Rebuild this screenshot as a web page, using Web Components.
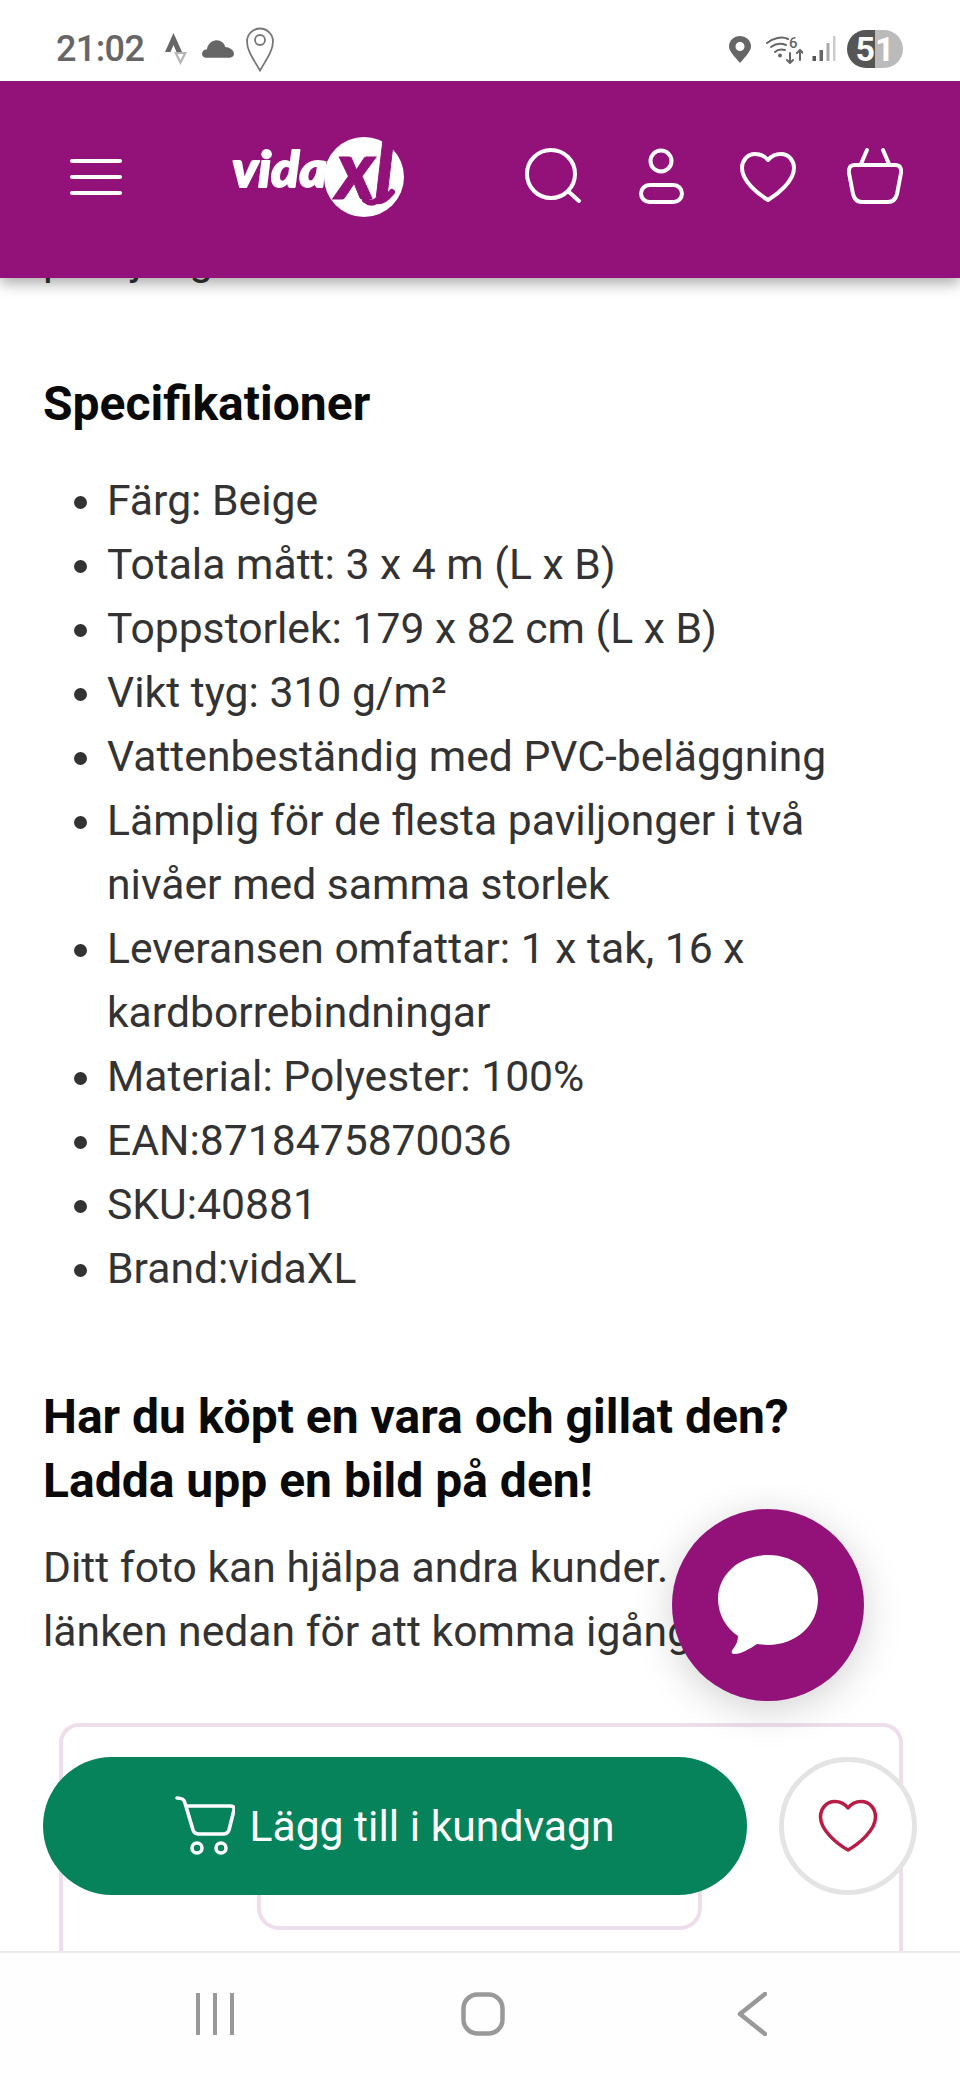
<!DOCTYPE html>
<html lang="sv"><head><meta charset="utf-8"><title>vidaXL</title>
<style>html,body{margin:0;padding:0;background:#fff}body{font-family:Roboto,sans-serif}</style>
</head><body>
<app-shell>
  <status-bar slot="status"></status-bar>
  <site-header slot="header"></site-header>
  <product-copy slot="content"></product-copy>
  <buy-bar slot="over"></buy-bar>
  <chat-fab slot="over"></chat-fab>
  <nav-bar slot="nav"></nav-bar>
</app-shell>
<script>
function def(name, html){
  customElements.define(name, class extends HTMLElement{
    constructor(){super();this.attachShadow({mode:'open'}).innerHTML=html;}
  });
}
def('app-shell',`<style>
:host{display:flex;flex-direction:column;width:960px;height:2080px;position:relative;overflow:hidden;background:#fff}
.c{flex:1;min-height:0;margin-top:-51px;overflow:hidden;display:block}
</style>
<slot name="status"></slot><slot name="header"></slot>
<div class="c"><slot name="content"></slot></div>
<slot name="over"></slot><slot name="nav"></slot>`);

def('status-bar',`<style>
:host{display:flex;align-items:center;height:81px;box-sizing:border-box;padding:17px 57px 0 56px;background:#fff;color:#666;position:relative;z-index:3}
.t{font:500 36px/1 Roboto,sans-serif;width:87px;letter-spacing:-.6px;white-space:nowrap}
svg{display:block;flex:none}
.r{margin-left:auto;display:flex;align-items:center}
.b{width:56px;height:38px;border-radius:19px;background:linear-gradient(90deg,#555 0 50%,#bbb 50% 100%);margin-left:10px;font:700 34px/38px Roboto,sans-serif;color:#fff;text-align:center}
</style>
<span class="t">21:02</span>
<svg style="margin-left:22px" width="22" height="32" viewBox="0 0 22 32"><path d="M8.500 0L17 19H11.500L8.500 12L5.500 19H0Z" fill="#666"/><path fill-rule="evenodd" d="M9 19H22L15.500 32ZM12.500 21L15.500 27L18.500 21Z" fill="#b5b5b5"/></svg>
<svg style="margin-left:15px" width="32" height="18" viewBox="0 0 33 18"><path d="M4 18C1 18 0 15.500 0 14C0 11 2.500 9 5 9.500C6 4 10 0 15 0C20 0 23 3 24 7C28 7 33 10 33 14C33 16.500 31 18 29 18Z" fill="#666"/></svg>
<svg style="margin-left:12px" width="28" height="45" viewBox="0 0 28 45"><path d="M14 43.500C8 33 1 24 1 14.500A13 13 0 0 1 27 14.500C27 24 20 33 14 43.500Z" fill="none" stroke="#777" stroke-width="1.800"/><circle cx="14" cy="13" r="5" fill="none" stroke="#777" stroke-width="1.800"/></svg>
<div class="r">
<svg width="22" height="27" viewBox="0 0 22 27"><path fill-rule="evenodd" d="M11 27C5 20 0 15 0 10.500A11 10.500 0 0 1 22 10.500C22 15 17 20 11 27ZM11 6A4.500 4.500 0 1 0 11 15A4.500 4.500 0 1 0 11 6Z" fill="#666"/></svg>
<svg style="margin:0 0 4px 15px" width="37" height="34" viewBox="0 -6 37 34"><g fill="none" stroke="#666" stroke-linecap="round" stroke-width="2"><path d="M1 7C7 2 16 0 22 3"/><path d="M5 11C9 8 15 7 20 9"/><path d="M9 16C11 14 15 13 19 14"/><path d="M24 17V27M21 24L24 27L27 24"/><path d="M34 24V14M31 17L34 14L37 17"/></g><circle cx="14" cy="19.500" r="2" fill="#666"/><text x="23" y="12" font-family="Roboto" font-weight="500" font-size="15" fill="#666">6</text></svg>
<svg style="margin-left:9px" width="25" height="26" viewBox="0 0 25 26"><rect x="0.500" y="20" width="3.500" height="5" fill="#555"/><rect x="7.500" y="14" width="3.500" height="11" fill="#666"/><rect x="14.500" y="7" width="3" height="18" fill="#aaa"/><rect x="21" y="0" width="2.500" height="25" fill="#ccc"/></svg>
<div class="b">51</div>
</div>`);

def('site-header',`<style>
:host{display:flex;align-items:center;height:197px;box-sizing:border-box;padding:0 45px 5px 70px;background:#92127a;box-shadow:0 5px 14px rgba(0,0,0,.35);position:relative;z-index:2}
svg{display:block;flex:none}
.i{margin-left:auto;display:flex;gap:27px}
.s{fill:none;stroke:#fff;stroke-width:4;stroke-linecap:round;stroke-linejoin:round}
</style>
<svg width="52" height="36" viewBox="0 0 52 36"><g stroke="#fff" stroke-width="4" stroke-linecap="round"><path d="M2 2H50M2 18H50M2 34H50"/></g></svg>
<svg style="margin-left:106px" width="182" height="132" viewBox="0 -20 182 132">
<circle cx="136" cy="46" r="40" fill="#fff"/>
<path d="M99 62L106 40L118 52Z" fill="#fff"/>
<text x="4" y="56" font-family="Lato" font-weight="900" font-style="italic" font-size="50" fill="#fff" stroke="#fff" stroke-width="1.800" stroke-linejoin="round" textLength="95" lengthAdjust="spacingAndGlyphs">vida</text>
<text x="108" y="68" font-family="Lato" font-weight="900" font-style="italic" font-size="82" fill="#92127a" stroke="#92127a" stroke-width="1" textLength="58" lengthAdjust="spacingAndGlyphs">xl</text>
<path d="M137 69Q143 74 148 70Q155 72 164 61" fill="none" stroke="#92127a" stroke-width="6" stroke-linecap="round"/>
</svg>
<div class="i">
<svg class="s" width="80" height="80" viewBox="0 0 80 80"><circle cx="37" cy="37" r="24"/><path d="M55 55L65 64"/></svg>
<svg class="s" width="80" height="80" viewBox="0 0 80 80"><circle cx="40" cy="24" r="10.500"/><rect x="20" y="48" width="41" height="17" rx="8.500"/></svg>
<svg class="s" width="80" height="80" viewBox="0 0 80 80"><path d="M40 23C36 18 31 17 27 17C19 17 14 24 14 31C14 44 30 57 40 63C50 57 66 44 66 31C66 24 61 17 53 17C49 17 44 18 40 23Z"/></svg>
<svg class="s" width="80" height="80" viewBox="0 0 80 80"><path d="M20 28H60Q67 28 66 36L62 57Q60 65 53 65H27Q20 65 18 57L14 36Q13 28 20 28Z"/><path d="M26 27L32 13M54 27L48 13"/></svg>
</div>`);

def('product-copy',`<style>
:host{display:block;padding:0 44px 0 43px;font:400 42.67px/64px Roboto,sans-serif;color:#333}
p,h2,ul{margin:0}
h2{font:700 48px/64px Roboto,sans-serif;color:#0a0a0a}
ul{padding-left:64px}
.top{margin-bottom:81px}
.l{margin:32px 0 85px}
.q{margin-top:22px}
.box{margin:60px 13px 0 16px;border:4px solid #eedeec;border-bottom:0;border-radius:20px 20px 0 0;height:400px;padding-top:63px;box-sizing:border-box}
.in{width:445px;height:140px;box-sizing:border-box;margin:0 0 0 194px;border:4px solid #eedeec;border-radius:22px}
</style>
<p class="top">paviljong.</p>
<h2>Specifikationer</h2>
<ul class="l">
<li>Färg: Beige</li>
<li>Totala mått: 3 x 4 m (L x B)</li>
<li>Toppstorlek: 179 x 82 cm (L x B)</li>
<li>Vikt tyg: 310 g/m²</li>
<li>Vattenbeständig med PVC-beläggning</li>
<li>Lämplig för de flesta paviljonger i två nivåer med samma storlek</li>
<li>Leveransen omfattar: 1 x tak, 16 x kardborrebindningar</li>
<li>Material: Polyester: 100%</li>
<li>EAN:8718475870036</li>
<li>SKU:40881</li>
<li>Brand:vidaXL</li>
</ul>
<h2>Har du köpt en vara och gillat den?<br>Ladda upp en bild på den!</h2>
<p class="q">Ditt foto kan hjälpa andra kunder. Använd länken nedan för att komma igång.</p>
<div class="box"><div class="in"></div></div>`);

def('buy-bar',`<style>
:host{position:absolute;left:43px;top:1757px;width:874px;display:flex;justify-content:space-between;z-index:1}
.g{width:704px;height:138px;border-radius:69px;background:#06835b;color:#fff;display:flex;align-items:center;justify-content:center;gap:14px;font:400 42.67px/1 Roboto,sans-serif;box-sizing:border-box}
.h{width:138px;height:138px;border-radius:50%;box-sizing:border-box;border:5px solid #e4e4e4;background:#fff;display:flex;align-items:center;justify-content:center}
svg{display:block}
</style>
<div class="g"><svg width="60" height="60" viewBox="0 0 60 60"><g fill="none" stroke="#fff" stroke-width="3.600" stroke-linecap="round" stroke-linejoin="round"><path d="M2 2C7 2 9 3 10 7L18 34C19 37 21 38 24 38H48C51 38 53 37 54 34L59 14C59.500 11 58 10 55 10H12"/><circle cx="22" cy="52" r="5"/><circle cx="46" cy="52" r="5"/></g></svg><span>Lägg till i kundvagn</span></div>
<div class="h"><svg width="60" height="54" viewBox="0 0 60 54"><path d="M30 9C26 4 21 2.500 17 2.500C8 2.500 2.500 10 2.500 18C2.500 31 19 45 30 51C41 45 57.500 31 57.500 18C57.500 10 52 2.500 43 2.500C39 2.500 34 4 30 9Z" fill="none" stroke="#b81d45" stroke-width="3.500" stroke-linejoin="round"/></svg></div>`);

def('chat-fab',`<style>
:host{position:absolute;left:672px;top:1509px;width:192px;height:192px;border-radius:50%;background:#92127a;box-shadow:0 8px 40px rgba(0,0,0,.18);display:flex;align-items:center;justify-content:center;z-index:1}
svg{display:block}
</style>
<svg width="100" height="100" viewBox="0 0 100 100"><path d="M50 0C78 0 100 19 100 44C100 70 78 90 50 90L39 89C32 94 22 99 17 99C13 99 13 97 15 94C18 90 20 86 20 81C8 73 0 59 0 44C0 19 22 0 50 0Z" fill="#fff"/></svg>`);

def('nav-bar',`<style>
:host{display:grid;grid-template-columns:repeat(3,268px);height:129px;box-sizing:border-box;padding:0 0 6px 81px;border-top:2px solid #ebebeb;background:#fefefe;position:relative;z-index:2;align-items:center;justify-items:center}
svg{display:block}
</style>
<svg width="40" height="42" viewBox="0 0 40 42"><path d="M3 1V41M20 1V41M37 1V41" stroke="#999" stroke-width="4" stroke-linecap="round"/></svg>
<svg width="44" height="44" viewBox="0 0 44 44"><rect x="2.500" y="2.500" width="39" height="39" rx="14" fill="none" stroke="#999" stroke-width="4.500"/></svg>
<svg style="margin-left:2px" width="30" height="44" viewBox="0 0 30 44"><path d="M28 2L3 22L28 42" fill="none" stroke="#999" stroke-width="4.500" stroke-linecap="round" stroke-linejoin="round"/></svg>`);
</script>
</body></html>
